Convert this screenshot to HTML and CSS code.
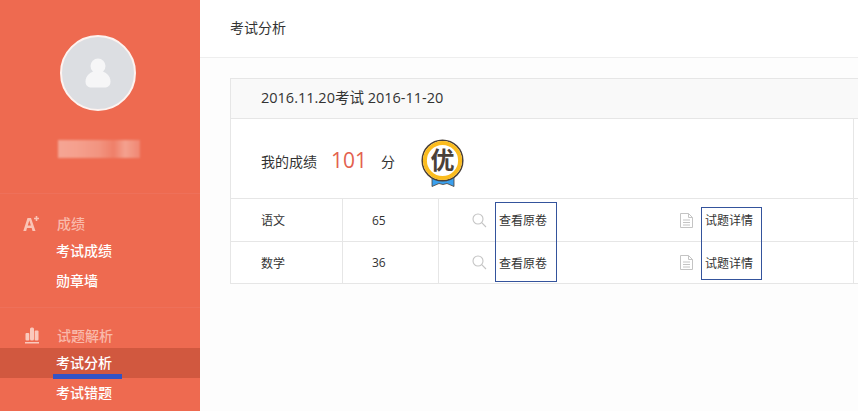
FILE: index.html
```html
<!DOCTYPE html>
<html lang="zh-CN">
<head>
<meta charset="UTF-8">
<meta name="viewport" content="width=device-width, initial-scale=1.0">
<title>考试分析</title>
<link rel="stylesheet" href="styles.css">
</head>
<body>
    <aside class="sidebar">
        <div class="profile">
            <div class="avatar">
                <svg width="28" height="30" viewBox="0 0 28 30">
                    <circle cx="14" cy="8" r="7.5" fill="#f6f6f7"/>
                    <path d="M14 13C6 13 1.500 18 1.500 23.500C1.500 27.500 4 29.500 8 29.500H20C24 29.500 26.500 27.500 26.500 23.500C26.500 18 22 13 14 13Z" fill="#f6f6f7"/>
                </svg>
            </div>
            <div class="user-name"></div>
        </div>
        <div class="menu-group">
            <div class="menu-title">
                <svg class="menu-icon" width="18" height="17" viewBox="0 0 18 17">
                    <path d="M4.500 3H8L12.500 16H9.500L8.700 13H4L3.200 16H0.300ZM4.800 10.500H7.900L6.300 5.500Z" fill="#fac4b6" fill-rule="evenodd"/>
                    <path d="M13.500 1V6M11 3.500H16" stroke="#fac4b6" stroke-width="1.600"/>
                </svg>
                <span>成绩</span>
            </div>
            <a class="menu-item">考试成绩</a>
            <a class="menu-item">勋章墙</a>
        </div>
        <div class="menu-group">
            <div class="menu-title">
                <svg class="menu-icon" width="18" height="17" viewBox="0 0 18 17">
                    <rect x="2.500" y="6" width="3.800" height="7.500" rx="1" fill="#fac9bd"/>
                    <rect x="7" y="0.500" width="4" height="13" rx="1.500" fill="#fac9bd"/>
                    <rect x="11.700" y="3.500" width="3.800" height="10" rx="1" fill="#fac9bd"/>
                    <path d="M2 15.750H16" stroke="#fac9bd" stroke-width="1.500"/>
                </svg>
                <span>试题解析</span>
            </div>
            <a class="menu-item active">考试分析</a>
            <a class="menu-item">考试错题</a>
        </div>
    </aside>

    <main class="content">
        <header class="page-title">考试分析</header>
        <div class="page-body">
            <section class="exam-card">
                <div class="exam-head">2016.11.20考试 2016-11-20</div>
                <div class="exam-score">
                    <span class="score-label">我的成绩</span>
                    <span class="score-value">101</span>
                    <span class="score-unit">分</span>
                    <div class="medal">
                        <svg class="medal-art" width="44" height="48" viewBox="0 0 44 48">
                            <path d="M11 36V47.500L18 44.500L22 45.500L26 44.500L33 47.500V36Z" fill="#3aa0ee" stroke="#4a4038" stroke-width="0.800"/>
                            <circle cx="21.500" cy="21.500" r="20.300" fill="#fff" stroke="#4a4038" stroke-width="1.500"/>
                            <circle cx="21.500" cy="21.500" r="17.600" fill="none" stroke="#fbbc1f" stroke-width="4"/>
                        </svg>
                        <span class="medal-text">优</span>
                    </div>
                    <div class="cell-end"></div>
                </div>
                <div class="subject-list">
                    <div class="subject-row">
                        <div class="cell cell-name">语文</div>
                        <div class="cell cell-mark">65</div>
                        <div class="cell cell-paper">
                            <svg class="row-icon" width="15" height="15" viewBox="0 0 15 15">
                                <circle cx="6" cy="6" r="5" fill="none" stroke="#c4c4c4" stroke-width="1.100"/>
                                <path d="M9.700 9.700L14 14" stroke="#c4c4c4" stroke-width="1.100"/>
                            </svg>
                            <span class="paper-link">查看原卷</span>
                        </div>
                        <div class="cell cell-detail">
                            <svg class="row-icon" width="13" height="15" viewBox="0 0 13 15">
                                <path d="M0.500 0.500H8.500L12.500 4.500V14.500H0.500Z" fill="none" stroke="#c4c4c4"/>
                                <path d="M8.500 0.500V4.500H12.500M3 7H10M3 9.500H10M3 12H10" fill="none" stroke="#c4c4c4"/>
                            </svg>
                            <span class="detail-link">试题详情</span>
                        </div>
                        <div class="cell-end"></div>
                    </div>
                    <div class="subject-row">
                        <div class="cell cell-name">数学</div>
                        <div class="cell cell-mark">36</div>
                        <div class="cell cell-paper">
                            <svg class="row-icon" width="15" height="15" viewBox="0 0 15 15">
                                <circle cx="6" cy="6" r="5" fill="none" stroke="#c4c4c4" stroke-width="1.100"/>
                                <path d="M9.700 9.700L14 14" stroke="#c4c4c4" stroke-width="1.100"/>
                            </svg>
                            <span class="paper-link">查看原卷</span>
                        </div>
                        <div class="cell cell-detail">
                            <svg class="row-icon" width="13" height="15" viewBox="0 0 13 15">
                                <path d="M0.500 0.500H8.500L12.500 4.500V14.500H0.500Z" fill="none" stroke="#c4c4c4"/>
                                <path d="M8.500 0.500V4.500H12.500M3 7H10M3 9.500H10M3 12H10" fill="none" stroke="#c4c4c4"/>
                            </svg>
                            <span class="detail-link">试题详情</span>
                        </div>
                        <div class="cell-end"></div>
                    </div>
                </div>
                <div class="outline outline-paper"></div>
                <div class="outline outline-detail"></div>
            </section>
        </div>
    </main>
</body>
</html>
```

FILE: styles.css
```css
html, body {
    height: 100%;
}

body {
    margin: 0;
    display: flex;
    height: 411px;
    overflow: hidden;
    font-family: "Open Sans", "Noto Sans CJK SC", sans-serif;
    font-size: 12px;
    color: #333;
    background-color: #fff;
}

.sidebar {
    width: 200px;
    flex-shrink: 0;
    background-color: #ee6a50;
    color: #fff;
}

.profile {
    height: 194px;
    box-sizing: border-box;
    padding-top: 35px;
    border-bottom: 1px solid #ee705a;
}

.avatar {
    width: 72px;
    height: 72px;
    margin-left: 60px;
    display: flex;
    justify-content: center;
    align-items: center;
    background-color: #dcdee2;
    border: 2px solid #fdf3f0;
    border-radius: 50%;
}

.user-name {
    width: 82px;
    height: 18px;
    margin: 29px 0 0 58px;
    background: linear-gradient(90deg, #f5a594 0, #f5a08e 22%, #f29480 50%, #ef7f69 68%, #f4a18f 82%, #f08672 100%);
    filter: blur(1px);
}

.menu-group {
    padding-top: 18px;
    height: 114px;
    box-sizing: border-box;
    border-bottom: 1px solid #ee705a;
}

.menu-group + .menu-group {
    padding-top: 16px;
}

.menu-title {
    height: 22px;
    margin-bottom: 2px;
    display: flex;
    align-items: center;
    color: #f9b9aa;
    font-size: 14px;
    font-weight: 500;
    padding-left: 23px;
}

.menu-icon {
    margin-right: 16px;
}

.menu-item {
    display: block;
    height: 30px;
    line-height: 30px;
    padding-left: 56px;
    font-size: 14px;
    font-weight: 500;
}

.menu-item.active {
    position: relative;
    background-color: #d1583f;
}

.menu-item.active::after {
    content: "";
    position: absolute;
    left: 53px;
    top: 26px;
    width: 69px;
    height: 5px;
    background-color: #3353c4;
}

.content {
    flex: 1;
    min-width: 0;
    background-color: #fdfdfd;
}

.page-title {
    height: 57px;
    line-height: 56px;
    padding-left: 30px;
    font-size: 14px;
    background-color: #fff;
    border-bottom: 1px solid #eee;
}

.page-body {
    padding: 20px 0 0 30px;
}

.exam-card {
    position: relative;
    border: 1px solid #e6e6e6;
    border-right: none;
    background-color: #fff;
}

.exam-head {
    height: 39px;
    line-height: 38px;
    padding-left: 30px;
    font-size: 14.5px;
    background-color: #f9f9f9;
    border-bottom: 1px solid #e6e6e6;
}

.exam-score {
    height: 79px;
    display: flex;
    align-items: center;
    padding-left: 30px;
    border-bottom: 1px solid #e6e6e6;
    font-size: 14px;
}

.score-label,
.score-unit,
.score-value {
    position: relative;
    top: 2px;
}

.score-value {
    top: 1px;
    margin-left: 14px;
    font-size: 21px;
    color: #e3614e;
}

.score-unit {
    margin-left: 14px;
}

.medal {
    position: relative;
    width: 43px;
    height: 48px;
    margin: 9px 0 0 26px;
}

.medal-art {
    display: block;
}

.medal-text {
    position: absolute;
    left: 0;
    right: 0;
    top: 8px;
    text-align: center;
    font-size: 24px;
    line-height: 26px;
    font-weight: 700;
    color: #4a4038;
}

.subject-row {
    display: flex;
    height: 42px;
    border-bottom: 1px solid #e6e6e6;
}

.subject-row:last-child {
    height: 41px;
    border-bottom: none;
}

.cell {
    display: flex;
    align-items: center;
    box-sizing: border-box;
}

.cell-name {
    width: 112px;
    padding-left: 30px;
    border-right: 1px solid #e6e6e6;
}

.cell-mark {
    width: 96px;
    padding-left: 29px;
    border-right: 1px solid #e6e6e6;
}

.cell-paper {
    width: 241px;
    padding-left: 33px;
}

.row-icon {
    margin-right: 12px;
}

.cell-end {
    margin-left: auto;
    align-self: stretch;
    width: 4px;
    border-left: 1px solid #e6e6e6;
}

/* hand-drawn boxes over the two link columns */
.outline {
    position: absolute;
    box-sizing: border-box;
    border: 1px solid #34539c;
}

.outline-paper {
    left: 264px;
    top: 123px;
    width: 62px;
    height: 80px;
}

.outline-detail {
    left: 470px;
    top: 128px;
    width: 61px;
    height: 73px;
}
```
